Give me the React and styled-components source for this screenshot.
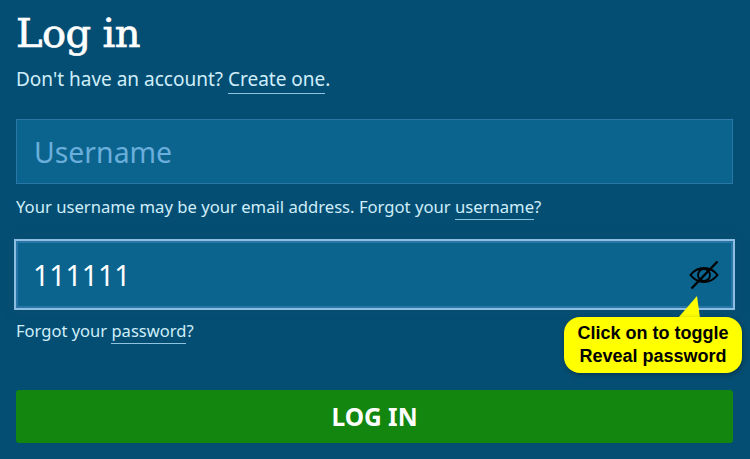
import React from 'react';
import styled, { createGlobalStyle } from 'styled-components';

const GlobalStyle = createGlobalStyle`
  html, body {
    margin: 0;
    padding: 0;
    height: 100%;
    background: #054e73;
  }
`;

const Page = styled.div`
  width: 750px;
  height: 459px;
  box-sizing: border-box;
  padding: 0 17px 0 16px;
  overflow: hidden;
  background: #054e73;
  color: #cfeefa;
  font-family: "Noto Sans", "Open Sans", sans-serif;
  position: relative;
`;

const Title = styled.h1`
  margin: 0;
  padding: 9px 0 0 0;
  height: 48px;
  font-family: "DejaVu Serif", serif;
  font-weight: 400;
  font-size: 40px;
  line-height: 48px;
  letter-spacing: -0.6px;
  -webkit-text-stroke: 0.7px #fff;
  color: #fff;
`;

const Help = styled.p`
  margin: ${(p) => p.$top}px 0 0 0;
  font-size: ${(p) => p.$size}px;
  line-height: 24px;
  height: 24px;
  color: #cfeefa;
`;

const Link = styled.a`
  color: #cfeefa;
  text-decoration: none;
  border-bottom: 1px solid #8fc4e0;
  padding-bottom: 1px;
`;

const Field = styled.div`
  box-sizing: border-box;
  display: flex;
  align-items: center;
  justify-content: space-between;
  background: #0b648e;
  height: ${(p) => (p.$focused ? 71 : 65)}px;
  margin: ${(p) => p.$top}px ${(p) => (p.$focused ? -2 : 0)}px 0 ${(p) => (p.$focused ? -2 : 0)}px;
  padding: 0 14px 0 17px;
  border: ${(p) => (p.$focused ? '2px solid #8dbde0' : '1px solid #2a76a8')};
  font-size: 28.4px;
  color: ${(p) => (p.$focused ? '#fff' : '#6aaedb')};
  ${(p) => p.$focused && 'box-shadow: 0 0 10px rgba(10, 80, 110, 0.9), inset 0 0 0 2px #2a76a8;'}
`;

const Submit = styled.button`
  display: block;
  width: 100%;
  height: 53px;
  margin-top: 47px;
  border: 0;
  border-radius: 3px;
  background: #12860e;
  color: #fff;
  font-family: "Noto Sans", "Open Sans", sans-serif;
  font-size: 24.5px;
  font-weight: 700;
`;

const Callout = styled.div`
  position: absolute;
  left: 564px;
  top: 317px;
  box-sizing: border-box;
  width: 178px;
  height: 56px;
  padding-top: 5px;
  border-radius: 16px;
  background: #ffff00;
  box-shadow: 1px 2px 5px rgba(0, 30, 50, 0.5);
  color: #000;
  font-family: "Liberation Sans", Arial, sans-serif;
  font-weight: 700;
  font-size: 18px;
  line-height: 23px;
  text-align: center;
`;

const Tail = styled.svg`
  position: absolute;
  left: 675px;
  top: 294px;
`;

const EyeOff = () => (
  <svg width="30" height="30" viewBox="0 0 30 30" fill="none" stroke="#000" strokeWidth="2">
    <path d="M1.500 15C5 10.500 10 8 15 8s10 2.500 13.500 7C25 19.500 20 22 15 22S5 19.500 1.500 15Z" />
    <circle cx="15" cy="15" r="6" strokeWidth="1.800" />
    <path d="M28.500 1.500 2.500 28.500" strokeWidth="2.400" />
  </svg>
);

export default function App() {
  return (
    <Page>
      <GlobalStyle />
      <Title>Log in</Title>
      <Help $top={10} $size={19}>
        Don't have an account? <Link href="#">Create one</Link>.
      </Help>
      <Field $top={28}>Username</Field>
      <Help $top={11} $size={16.65}>
        Your username may be your email address. Forgot your <Link href="#">username</Link>?
      </Help>
      <Field $focused $top={20}>
        111111
        <EyeOff />
      </Field>
      <Help $top={9} $size={16.55}>
        Forgot your <Link href="#">password</Link>?
      </Help>
      <Submit>LOG IN</Submit>
      <Tail width="30" height="26" viewBox="0 0 30 26">
        <path d="M22 2 L3 24 L25 24 Z" fill="#ffff00" />
      </Tail>
      <Callout>
        Click on to toggle
        <br />
        Reveal password
      </Callout>
    </Page>
  );
}
